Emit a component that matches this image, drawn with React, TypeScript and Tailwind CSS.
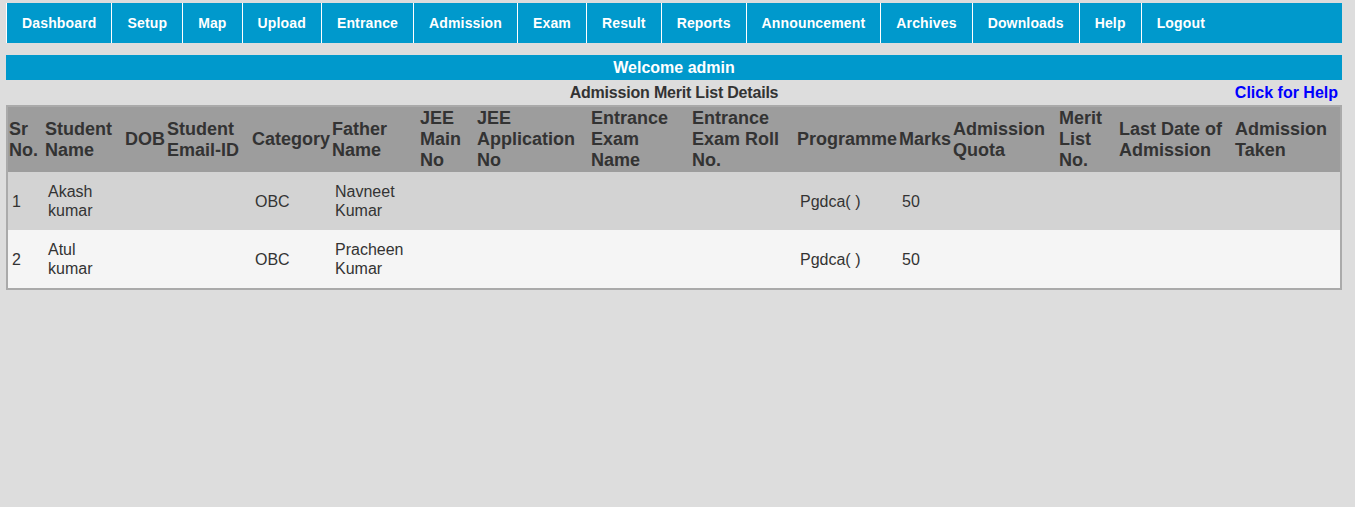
import React from "react";

const navItems = [
  "Dashboard",
  "Setup",
  "Map",
  "Upload",
  "Entrance",
  "Admission",
  "Exam",
  "Result",
  "Reports",
  "Announcement",
  "Archives",
  "Downloads",
  "Help",
  "Logout",
];

const columns: { label: string; width: number }[] = [
  { label: "Sr No.", width: 36 },
  { label: "Student Name", width: 80 },
  { label: "DOB", width: 42 },
  { label: "Student Email-ID", width: 85 },
  { label: "Category", width: 80 },
  { label: "Father Name", width: 88 },
  { label: "JEE Main No", width: 57 },
  { label: "JEE Application No", width: 114 },
  { label: "Entrance Exam Name", width: 101 },
  { label: "Entrance Exam Roll No.", width: 105 },
  { label: "Programme", width: 102 },
  { label: "Marks", width: 54 },
  { label: "Admission Quota", width: 106 },
  { label: "Merit List No.", width: 60 },
  { label: "Last Date of Admission", width: 116 },
  { label: "Admission Taken", width: 106 },
];

const rows = [
  ["1", "Akash kumar", "", "", "OBC", "Navneet Kumar", "", "", "", "", "Pgdca( )", "50", "", "", "", ""],
  ["2", "Atul kumar", "", "", "OBC", "Pracheen Kumar", "", "", "", "", "Pgdca( )", "50", "", "", "", ""],
];

const App = () => {
  return (
    <div className="min-h-[507px] bg-[#dddddd] px-[6px] pt-[3px] font-['Liberation_Sans',Arial,sans-serif] text-[#333333]">
      {/* top menu */}
      <ul className="flex h-[40px] w-[1336px] bg-[#0099cc]">
        {navItems.map((item) => (
          <li
            key={item}
            className="flex items-center border-l border-white px-[15px] text-[14px] font-bold tracking-[0.15px] text-white"
          >
            {item}
          </li>
        ))}
      </ul>

      <div className="mt-[12px] flex h-[25px] w-[1336px] items-center justify-center bg-[#0099cc] text-[16px] font-bold text-white">
        Welcome admin
      </div>

      <div className="grid h-[25px] w-[1336px] grid-cols-[1fr_auto_1fr] items-center text-[16px] font-bold">
        <div></div>
        <div className="tracking-[-0.2px] text-[#333333]">Admission Merit List Details</div>
        <div className="flex justify-end pr-[4px]">
          <a href="#" className="text-[#0000ff]">
            Click for Help
          </a>
        </div>
      </div>

      <table className="w-[1336px] table-fixed border-separate border-spacing-0 border-2 border-[#aaaaaa]">
        <colgroup>
          {columns.map((c) => (
            <col key={c.label} style={{ width: c.width }} />
          ))}
        </colgroup>
        <thead>
          <tr className="bg-[#9d9d9d]">
            {columns.map((c) => (
              <th
                key={c.label}
                className="p-[1px] text-left align-middle text-[18px] font-bold leading-[21px] text-[#333333]"
              >
                {c.label}
              </th>
            ))}
          </tr>
        </thead>
        <tbody>
          {rows.map((row, i) => (
            <tr key={i} className={i % 2 === 0 ? "bg-[#d3d3d3]" : "bg-[#f5f5f5]"}>
              {row.map((cell, j) => (
                <td
                  key={j}
                  className="h-[58px] px-[4px] py-[10px] align-middle text-[16px] leading-[19px] text-[#333333]"
                >
                  {cell}
                </td>
              ))}
            </tr>
          ))}
        </tbody>
      </table>
    </div>
  );
};

export default App;
